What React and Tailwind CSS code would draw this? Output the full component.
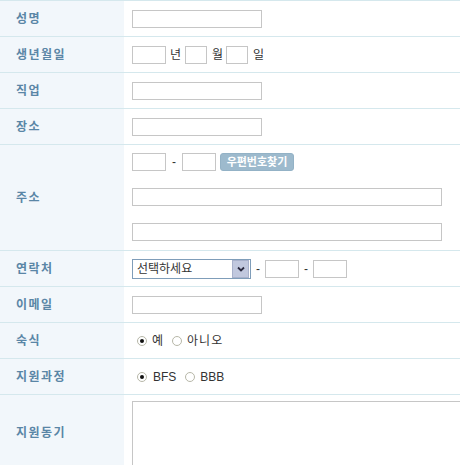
import React, { useState } from 'react';

const font = { fontFamily: '"Liberation Sans", "Noto Sans CJK KR", sans-serif' };

const TextBox = ({ className = '' }) => (
  <input
    type="text"
    className={`h-[18px] border border-[#c6c6c6] bg-white outline-none text-[12px] px-1 ${className}`}
  />
);

const Radio = ({ checked, onClick }) => (
  <span
    onClick={onClick}
    className="relative inline-flex w-[10px] h-[10px] rounded-full border border-[#b7b7a8] bg-white items-center justify-center cursor-pointer"
  >
    {checked && <span className="w-[4px] h-[4px] rounded-full bg-[#111]" />}
  </span>
);

const Row = ({ label, height = 'h-[36px]', children, contentClass = 'items-center' }) => (
  <div className={`flex border-t border-[#d5e8ed] ${height}`}>
    <div className="w-[124px] shrink-0 bg-[#f2f7fb] flex items-center pl-[16px]">
      <span className="text-[12px] font-bold text-[#5a86a6] tracking-[1.5px]">{label}</span>
    </div>
    <div className={`flex-1 flex pl-[8px] ${contentClass}`}>{children}</div>
  </div>
);

export default function App() {
  const [stay, setStay] = useState('yes');
  const [course, setCourse] = useState('BFS');

  return (
    <div className="w-[460px] h-[465px] overflow-hidden bg-white text-[#333]" style={font}>
      <Row label="성명">
        <TextBox className="w-[130px]" />
      </Row>

      <Row label="생년월일">
        <TextBox className="w-[34px]" />
        <span className="text-[12px] ml-[4px] mr-[4px]">년</span>
        <TextBox className="w-[22px]" />
        <span className="text-[12px] ml-[5px] mr-[3px]">월</span>
        <TextBox className="w-[22px]" />
        <span className="text-[12px] ml-[5px]">일</span>
      </Row>

      <Row label="직업">
        <TextBox className="w-[130px]" />
      </Row>

      <Row label="장소">
        <TextBox className="w-[130px]" />
      </Row>

      <Row label="주소" height="h-[106px]" contentClass="flex-col pt-[8px] gap-[17px]">
        <div className="flex items-center">
          <TextBox className="w-[34px]" />
          <span className="text-[12px] mx-[6px]">-</span>
          <TextBox className="w-[34px]" />
          <button className="ml-[4px] h-[18px] w-[74px] rounded-[3px] bg-[#9dbacd] border border-[#93b2c6] text-white text-[11px] font-bold leading-none">
            우편번호찾기
          </button>
        </div>
        <TextBox className="w-[310px]" />
        <TextBox className="w-[310px]" />
      </Row>

      <Row label="연락처">
        <div className="w-[119px] h-[20px] border border-[#7f9db9] bg-white flex items-center justify-between">
          <span className="text-[12px] pl-[4px] leading-none">선택하세요</span>
          <span className="w-[17px] h-[18px] mr-px bg-[#c1c8de] border border-[#a8b1cb] flex items-center justify-center">
            <svg width="8" height="6" viewBox="0 0 8 6">
              <path d="M1 1.5 L4 4.5 L7 1.5" fill="none" stroke="#2b2b40" strokeWidth="1.8" />
            </svg>
          </span>
        </div>
        <span className="text-[12px] mx-[5px]">-</span>
        <TextBox className="w-[34px]" />
        <span className="text-[12px] mx-[5px]">-</span>
        <TextBox className="w-[34px]" />
      </Row>

      <Row label="이메일">
        <TextBox className="w-[130px]" />
      </Row>

      <Row label="숙식">
        <div className="flex items-center pl-[5px] text-[12px]">
          <Radio checked={stay === 'yes'} onClick={() => setStay('yes')} />
          <span className="ml-[5px] mr-[9px]">예</span>
          <Radio checked={stay === 'no'} onClick={() => setStay('no')} />
          <span className="ml-[5px] tracking-[1px]">아니오</span>
        </div>
      </Row>

      <Row label="지원과정">
        <div className="flex items-center pl-[5px] text-[12px]">
          <Radio checked={course === 'BFS'} onClick={() => setCourse('BFS')} />
          <span className="ml-[6px] mr-[9px]">BFS</span>
          <Radio checked={course === 'BBB'} onClick={() => setCourse('BBB')} />
          <span className="ml-[5px]">BBB</span>
        </div>
      </Row>

      <Row label="지원동기" height="h-[77px]" contentClass="items-start pt-[6px]">
        <textarea className="w-[400px] h-[90px] shrink-0 border border-[#c6c6c6] outline-none resize-none" />
      </Row>
    </div>
  );
}
